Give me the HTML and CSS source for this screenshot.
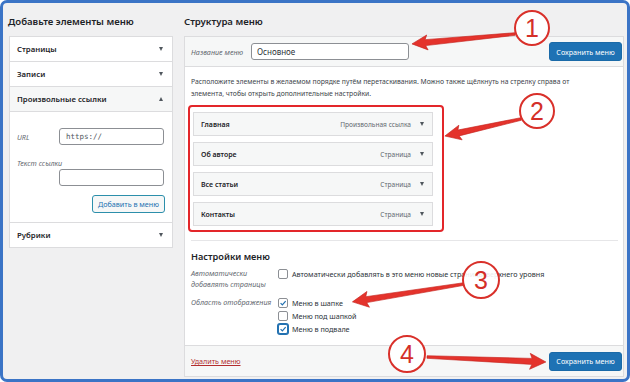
FILE: index.html
```html
<!DOCTYPE html>
<html lang="ru">
<head>
    <meta charset="UTF-8">
    <meta name="viewport" content="width=device-width, initial-scale=1.0">
    <title>Меню</title>
    <link rel="stylesheet" href="styles.css">
</head>
<body>

<div class="frame">
    <div class="col-left">
        <h2 class="col-title">Добавьте элементы меню</h2>
        <div class="accordion">
            <div class="acc-row"><span>Страницы</span><i class="tri-down"></i></div>
            <div class="acc-row"><span>Записи</span><i class="tri-down"></i></div>
            <div class="acc-row open"><span>Произвольные ссылки</span><i class="tri-up"></i></div>
            <div class="acc-body">
                <div class="field-row">
                    <label class="field-label">URL</label>
                    <input class="text-input mono" type="text" value="https://">
                </div>
                <label class="field-label block">Текст ссылки</label>
                <input class="text-input indent" type="text">
                <div class="btn-row">
                    <button class="btn-secondary">Добавить в меню</button>
                </div>
            </div>
            <div class="acc-row last"><span>Рубрики</span><i class="tri-down"></i></div>
        </div>
    </div>

    <div class="col-right">
        <h2 class="col-title">Структура меню</h2>
        <div class="menu-panel">
            <div class="panel-head">
                <label class="field-label">Название меню</label>
                <input class="text-input name-input" type="text" value="Основное">
                <button class="btn-primary">Сохранить меню</button>
            </div>

            <div class="panel-body">
                <p class="hint">Расположите элементы в желаемом порядке путём перетаскивания. Можно также щёлкнуть на стрелку справа от элемента, чтобы открыть дополнительные настройки.</p>

                <div class="mark-box">
                    <div class="menu-item"><b>Главная</b><span class="item-type">Произвольная ссылка</span><i class="tri-down"></i></div>
                    <div class="menu-item"><b>Об авторе</b><span class="item-type">Страница</span><i class="tri-down"></i></div>
                    <div class="menu-item"><b>Все статьи</b><span class="item-type">Страница</span><i class="tri-down"></i></div>
                    <div class="menu-item"><b>Контакты</b><span class="item-type">Страница</span><i class="tri-down"></i></div>
                </div>

                <div class="settings">
                    <h3>Настройки меню</h3>
                    <div class="set-row">
                        <div class="set-label">Автоматически<br>добавлять страницы</div>
                        <div class="set-options">
                            <div class="check"><span class="box"></span>Автоматически добавлять в это меню новые страницы верхнего уровня</div>
                        </div>
                    </div>
                    <div class="set-row">
                        <div class="set-label">Область отображения</div>
                        <div class="set-options">
                            <div class="check"><span class="box checked"><svg viewBox="0 0 10 10"><path d="M2 5.2 L4.2 7.4 L8.3 2.6" /></svg></span>Меню в шапке</div>
                            <div class="check"><span class="box"></span>Меню под шапкой</div>
                            <div class="check"><span class="box checked focus"><svg viewBox="0 0 10 10"><path d="M2 5.2 L4.2 7.4 L8.3 2.6" /></svg></span>Меню в подвале</div>
                        </div>
                    </div>
                </div>
            </div>

            <div class="panel-foot">
                <a href="#" class="delete-link">Удалить меню</a>
                <button class="btn-primary">Сохранить меню</button>
            </div>
        </div>
    </div>
</div>

<!-- numbered callouts drawn over the screenshot -->
<svg class="callouts" width="630" height="382" viewBox="0 0 630 382">
    <g class="arrow">
        <path transform="translate(515 34) rotate(174.5)" d="M0,-1.3 L90,-3 L88,-7.5 L103.5,0 L88,7.5 L90,3 L0,1.3 Z" />
        <path transform="translate(521 119) rotate(167.4)" d="M0,-1.3 L64,-3 L62,-7.5 L78,0 L62,7.5 L64,3 L0,1.3 Z" />
        <path transform="translate(464 284) rotate(170.9)" d="M0,-1.3 L99,-3 L97,-8 L113,0 L97,8 L99,3 L0,1.3 Z" />
        <path transform="translate(427 357) rotate(2.4)" d="M0,-1.3 L105,-3 L103,-8 L119,0 L103,8 L105,3 L0,1.3 Z" />
    </g>
    <g class="badge">
        <circle cx="532" cy="28" r="17" />
        <circle cx="537" cy="111" r="17" />
        <circle cx="481" cy="280" r="18" />
        <circle cx="407" cy="354" r="18" />
    </g>
    <g class="badge-num">
        <text x="532" y="37">1</text>
        <text x="537" y="120">2</text>
        <text x="481" y="289">3</text>
        <text x="407" y="363">4</text>
    </g>
</svg>

</body>
</html>
```

FILE: styles.css
```css
html, body {
    margin: 0;
    padding: 0;
}

body {
    position: relative;
    width: 630px;
    height: 382px;
    font-family: 'Noto Sans', 'Open Sans', sans-serif;
    color: #1d2327;
    overflow: hidden;
}

.frame {
    width: 630px;
    height: 382px;
    box-sizing: border-box;
    border: 3px solid #3b74c6;
    border-radius: 7px;
    background: #f0f0f1;
    display: flex;
    gap: 11px;
    padding: 10px 3px 0 6px;
}

.col-left {
    width: 164px;
    flex-shrink: 0;
}

.col-right {
    width: 440px;
    flex-shrink: 0;
}

.col-title {
    margin: 0;
    height: 23px;
    line-height: 18px;
    font-size: 9.6px;
    font-weight: 600;
    margin-left: -1px;
}

.col-right .col-title {
    margin-left: 0;
}

/* left accordion */
.accordion {
    background: #fff;
    border: 1px solid #dcdcde;
}

.acc-row {
    height: 24px;
    display: flex;
    align-items: center;
    justify-content: space-between;
    padding: 0 9px 0 7px;
    border-bottom: 1px solid #dcdcde;
    font-size: 7.8px;
    font-weight: 600;
}

.acc-row.open {
    background: #f6f7f7;
}

.acc-row.last {
    border-bottom: none;
}

.tri-down, .tri-up {
    width: 0;
    height: 0;
    border-left: 2.5px solid transparent;
    border-right: 2.5px solid transparent;
}

.tri-down {
    border-top: 4px solid #50575e;
}

.tri-up {
    border-bottom: 4px solid #50575e;
}

.acc-body {
    padding: 16px 7px 9px 7px;
    border-bottom: 1px solid #dcdcde;
}

.field-row {
    display: flex;
    align-items: center;
}

.field-label {
    font-size: 7.2px;
    font-style: italic;
    color: #646970;
    width: 42px;
    flex-shrink: 0;
}

.field-label.block {
    display: block;
    width: auto;
    margin-top: 13px;
    line-height: 11px;
}

.text-input {
    box-sizing: border-box;
    height: 17px;
    width: 105px;
    border: 1px solid #8c8f94;
    border-radius: 3px;
    background: #fff;
    padding: 0 6px;
    margin: 0;
    font-family: 'Noto Sans', sans-serif;
    font-size: 8px;
    color: #2c3338;
    outline: none;
}

.text-input.mono {
    font-family: 'DejaVu Sans Mono', monospace;
    font-size: 7.5px;
    color: #50575e;
}

.text-input.indent {
    display: block;
    margin-left: 42px;
}

.btn-row {
    display: flex;
    justify-content: flex-end;
    margin-top: 9px;
}

.btn-secondary {
    height: 18px;
    padding: 0 5px;
    border: 1px solid #2c8fab;
    border-radius: 3px;
    background: #f6f7f7;
    color: #2271b1;
    font-family: 'Noto Sans', sans-serif;
    font-size: 7.2px;
}

.btn-primary {
    height: 19px;
    width: 73px;
    padding: 0;
    border: 1px solid #1a6aa8;
    border-radius: 3px;
    background: #1e72b4;
    color: #fff;
    font-family: 'Noto Sans', sans-serif;
    font-size: 7.2px;
}

/* right panel */
.menu-panel {
    height: 341px;
    box-sizing: border-box;
    background: #fff;
    border: 1px solid #dcdcde;
    display: flex;
    flex-direction: column;
}

.panel-head {
    height: 29px;
    display: flex;
    align-items: center;
    padding: 0 1px 0 6px;
    background: #f6f7f7;
    border-bottom: 1px solid #dcdcde;
}

.panel-head .field-label {
    width: 60px;
}

.name-input {
    width: 158px;
    height: 17px;
    font-size: 8px;
    padding-left: 5px;
}

.panel-head .btn-primary {
    margin-left: auto;
}

.panel-body {
    flex: 1;
    padding: 9px 5px 0 6px;
}

.hint {
    margin: 0;
    max-width: 385px;
    font-size: 6.8px;
    line-height: 11.5px;
    color: #3c434a;
}

.mark-box {
    width: 256px;
    box-sizing: border-box;
    margin: 6px 0 0 -3px;
    border: 2px solid #e3262a;
    border-radius: 4px;
    padding: 5px 9px 4px 3px;
    display: flex;
    flex-direction: column;
    gap: 6px;
}

.menu-item {
    height: 24px;
    box-sizing: border-box;
    display: flex;
    align-items: center;
    padding: 0 8px 0 7px;
    background: #f6f7f7;
    border: 1px solid #dcdcde;
    font-size: 7px;
}

.menu-item b {
    font-weight: 600;
    flex: 1;
}

.item-type {
    font-size: 6.6px;
    color: #646970;
    margin-right: 9px;
}

.settings {
    margin-top: 8px;
    border-top: 1px solid #e6e6e8;
}

.settings h3 {
    margin: 9px 0 4px 0;
    font-size: 9.2px;
    line-height: 14px;
    font-weight: 600;
}

.set-row {
    display: flex;
    margin-bottom: 7px;
}

.set-label {
    width: 87px;
    flex-shrink: 0;
    font-size: 7.2px;
    font-style: italic;
    line-height: 11px;
    color: #646970;
}

.set-options {
    display: flex;
    flex-direction: column;
    gap: 2px;
}

.check {
    display: flex;
    align-items: center;
    height: 11px;
    font-size: 7.2px;
    color: #2c3338;
}

.box {
    width: 10px;
    height: 10px;
    box-sizing: border-box;
    border: 1px solid #8c8f94;
    border-radius: 2px;
    background: #fff;
    margin-right: 4px;
    flex-shrink: 0;
    display: flex;
}

.box svg {
    width: 100%;
    height: 100%;
}

.box svg path {
    fill: none;
    stroke: #2271b1;
    stroke-width: 1.5;
}

.box.focus {
    border-color: #2271b1;
    box-shadow: 0 0 0 1px #2271b1;
}

.panel-foot {
    height: 30px;
    display: flex;
    align-items: center;
    padding: 0 1px 0 6px;
    background: #f6f7f7;
    border-top: 1px solid #dcdcde;
}

.delete-link {
    font-size: 7.2px;
    color: #b32d2e;
}

.panel-foot .btn-primary {
    margin-left: auto;
}

/* callouts */
.callouts {
    position: absolute;
    top: 0;
    left: 0;
    pointer-events: none;
}

.arrow path {
    fill: #e4332c;
    stroke: #c4221d;
    stroke-width: 0.6;
}

.badge circle {
    fill: rgba(255, 255, 255, 0.9);
    stroke: #d9302a;
    stroke-width: 2;
}

.badge-num text {
    font-family: 'Liberation Sans', sans-serif;
    font-size: 25px;
    fill: #d42f28;
    text-anchor: middle;
}
```
